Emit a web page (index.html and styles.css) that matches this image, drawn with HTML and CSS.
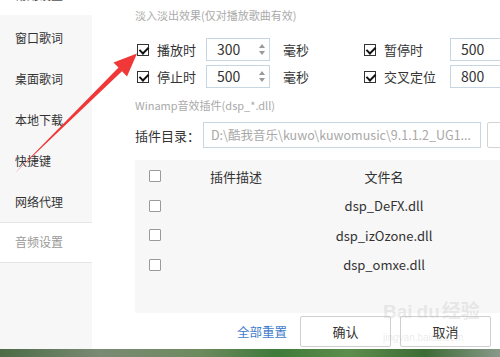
FILE: index.html
```html
<!DOCTYPE html>
<html lang="zh-CN">
<head>
    <meta charset="UTF-8" />
    <title>音频设置</title>
    <link rel="stylesheet" href="styles.css">
</head>
<body>
    <div class="app">
        <!-- 左侧菜单 -->
        <ul class="side">
            <li class="cut"><span>常用设置</span></li>
            <li class="group">
                <ul>
                    <li>窗口歌词</li>
                    <li>桌面歌词</li>
                    <li>本地下载</li>
                    <li>快捷键</li>
                    <li>网络代理</li>
                </ul>
            </li>
            <li class="active">音频设置</li>
            <li class="rest"></li>
        </ul>

        <!-- 右侧内容 -->
        <div class="main">
            <p class="tip">淡入淡出效果(仅对播放歌曲有效)</p>
            <div class="fade">
                <div class="opt">
                    <span class="chk on"></span>
                    <span class="lab">播放时</span>
                    <span class="num">300<i class="spin"></i></span>
                    <span class="unit">毫秒</span>
                </div>
                <div class="opt">
                    <span class="chk on"></span>
                    <span class="lab">暂停时</span>
                    <span class="num">500</span>
                </div>
                <div class="opt">
                    <span class="chk on"></span>
                    <span class="lab">停止时</span>
                    <span class="num">500<i class="spin"></i></span>
                    <span class="unit">毫秒</span>
                </div>
                <div class="opt">
                    <span class="chk on"></span>
                    <span class="lab">交叉定位</span>
                    <span class="num">800</span>
                </div>
            </div>

            <p class="tip tip2">Winamp音效插件(dsp_*.dll)</p>
            <div class="dir">
                <span class="dir-lab">插件目录：</span>
                <span class="path">D:\酷我音乐\kuwo\kuwomusic\9.1.1.2_UG1...</span>
                <span class="browse"></span>
            </div>

            <div class="table">
                <div class="tr th">
                    <span><i class="box"></i></span>
                    <span>插件描述</span>
                    <span>文件名</span>
                </div>
                <div class="tr">
                    <span><i class="box"></i></span>
                    <span></span>
                    <span>dsp_DeFX.dll</span>
                </div>
                <div class="tr">
                    <span><i class="box"></i></span>
                    <span></span>
                    <span>dsp_izOzone.dll</span>
                </div>
                <div class="tr">
                    <span><i class="box"></i></span>
                    <span></span>
                    <span>dsp_omxe.dll</span>
                </div>
            </div>

            <div class="btns">
                <a class="reset">全部重置</a>
                <button>确认</button>
                <button>取消</button>
            </div>

            <!-- 水印 -->
            <div class="mark">
                <span class="mark-big">Bai<b>du</b>经验</span>
                <span class="mark-small">jingyan.baidu.com</span>
            </div>
        </div>

        <!-- 红色箭头 -->
        <svg class="arrow" width="500" height="357" viewBox="0 0 500 357">
            <polygon points="15,173 118.5,67.4 113.5,62.5 137,53.5 127,76.5 122,71.2" fill="#f03838" />
        </svg>
    </div>
    <div class="strip"></div>
</body>
</html>
```
FILE: styles.css
```css
* {
    margin: 0;
    padding: 0;
    box-sizing: border-box;
}

ul {
    list-style: none;
}

body {
    width: 500px;
    height: 357px;
    overflow: hidden;
    background: #fff;
    font-family: "Noto Sans CJK SC", sans-serif;
    font-size: 12px;
    color: #333;
}

.app {
    position: relative;
    display: flex;
    height: 349px;
}

/* 左侧菜单 */
.side {
    width: 92px;
    display: flex;
    flex-direction: column;
    background: #f7f7f7;
}

.side li {
    padding-left: 15px;
}

.side .cut {
    height: 15px;
    background: #fff;
    overflow: hidden;
    color: #555;
}

.side .cut span {
    display: block;
    line-height: 16px;
    margin-top: -13px;
}

.side .group {
    padding: 2px 0 0;
    border-bottom: 1px solid #e6e6e6;
}

.side .group li {
    height: 41px;
    line-height: 41px;
}

.side .active {
    height: 40px;
    line-height: 38px;
    background: #fff;
    color: #9a9a9a;
    border-bottom: 1px solid #e6e6e6;
}

.side .rest {
    flex: 1;
}

/* 右侧 */
.main {
    position: relative;
    flex: 1;
    padding-left: 43px;
    overflow: hidden;
}

.tip {
    height: 30px;
    line-height: 30px;
    font-size: 11px;
    color: #aaa;
}

.fade {
    display: grid;
    grid-template-columns: 227px 200px;
    row-gap: 4px;
    margin-top: 8px;
}

.opt {
    display: flex;
    align-items: center;
    height: 23px;
}

.chk {
    flex-shrink: 0;
    width: 12px;
    height: 12px;
    margin-left: 2px;
    margin-right: 8px;
    border: 1px solid #333;
    position: relative;
}

.chk.on::after {
    content: "";
    position: absolute;
    left: 3px;
    top: 0;
    width: 4px;
    height: 7px;
    border: solid #111;
    border-width: 0 2px 2px 0;
    transform: rotate(45deg);
}

.lab {
    width: 49px;
    font-size: 13px;
}

.opt:nth-child(even) .lab {
    width: 66px;
}

.num {
    position: relative;
    flex-shrink: 0;
    width: 64px;
    height: 23px;
    line-height: 21px;
    padding-left: 10px;
    border: 1px solid #c8d5e3;
    font-size: 14px;
}

.spin::before,
.spin::after {
    content: "";
    position: absolute;
    right: 4px;
    border-left: 3px solid transparent;
    border-right: 3px solid transparent;
}

.spin::before {
    top: 5px;
    border-bottom: 4px solid #999;
}

.spin::after {
    bottom: 5px;
    border-top: 4px solid #999;
}

.unit {
    margin-left: 13px;
    font-size: 13px;
}

.tip2 {
    margin-top: 2px;
}

.dir {
    display: flex;
    align-items: center;
    margin-top: 2px;
}

.dir-lab {
    flex-shrink: 0;
    width: 68px;
    font-size: 13px;
    white-space: nowrap;
}

.path {
    flex-shrink: 0;
    width: 278px;
    height: 26px;
    line-height: 24px;
    padding: 0 6px 0 7px;
    border: 1px solid #c8d5e3;
    color: #a8a8a8;
    font-size: 12.5px;
    white-space: nowrap;
    overflow: hidden;
    text-overflow: ellipsis;
}

.browse {
    flex-shrink: 0;
    width: 40px;
    height: 26px;
    margin-left: 6px;
    border: 1px solid #d4d4d4;
    border-radius: 2px;
}

/* 插件列表 */
.table {
    margin-top: 12px;
    height: 153px;
    width: 380px;
    background: #f7f7f7;
    padding-top: 2px;
}

.tr {
    display: grid;
    grid-template-columns: 50px 102px 194px;
    height: 29.5px;
    align-items: center;
    text-align: center;
    font-size: 13px;
}

.tr span:first-child {
    text-align: left;
    padding-left: 14px;
    display: flex;
}

.box {
    width: 12px;
    height: 12px;
    border: 1px solid #9a9a9a;
    border-radius: 1px;
    background: #fff;
}

.th {
    height: 28px;
    margin-bottom: 1px;
}

/* 底部按钮 */
.btns {
    display: flex;
    align-items: center;
    margin-top: 3px;
}

.reset {
    margin-left: 102px;
    width: 64px;
    color: #3f7ccc;
    font-size: 12.5px;
    cursor: pointer;
}

.btns button {
    flex-shrink: 0;
    width: 91px;
    height: 31px;
    margin-right: 9px;
    border: 1px solid #cfcfcf;
    border-radius: 2px;
    background: #fff;
    font: 13px "Noto Sans CJK SC", sans-serif;
    color: #333;
}

/* 水印 */
.mark {
    position: absolute;
    left: 291px;
    top: 299px;
    display: flex;
    flex-direction: column;
    color: rgba(190, 190, 190, 0.3);
    pointer-events: none;
}

.mark-big {
    font: bold 19px "Liberation Sans", "Noto Sans CJK SC", sans-serif;
    line-height: 26px;
    white-space: nowrap;
}

.mark-big b {
    font-weight: bold;
    margin: 0 2px 0 4px;
}

.mark-small {
    margin-top: 7px;
    font: 10px "Liberation Sans", sans-serif;
    white-space: nowrap;
}

.arrow {
    position: absolute;
    left: 0;
    top: 0;
    pointer-events: none;
}

.strip {
    height: 8px;
    background: linear-gradient(90deg, #4b6b45, #7a8a74 20%, #6d8a5e 40%, #3e7a3a 55%, #5d8d4c 70%, #3d6b35 85%, #89998a);
}
```
